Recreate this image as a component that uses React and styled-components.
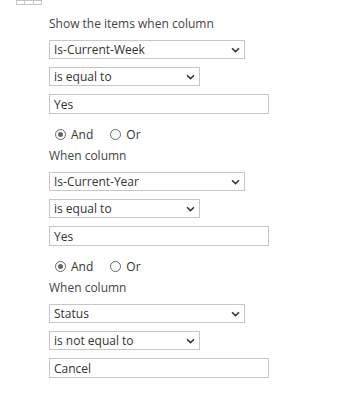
import styled, { createGlobalStyle } from 'styled-components';

const GlobalStyle = createGlobalStyle`
  body {
    margin: 0;
    background: #ffffff;
    font-family: 'Open Sans', 'Noto Sans', sans-serif;
  }
`;

const groups = [
  { label: 'Show the items when column', column: 'Is-Current-Week', op: 'is equal to', value: 'Yes', join: true },
  { label: 'When column', column: 'Is-Current-Year', op: 'is equal to', value: 'Yes', join: true },
  { label: 'When column', column: 'Status', op: 'is not equal to', value: 'Cancel', join: false }
];

function Chevron() {
  return (
    <svg width="9" height="6" viewBox="0 0 9 6">
      <path d="M1 1.2 L4.5 4.6 L8 1.2" fill="none" stroke="#333" strokeWidth="1.5" />
    </svg>
  );
}

function TableIcon() {
  return (
    <svg width="26" height="12" viewBox="0 0 26 12">
      <g fill="none" stroke="#c4c4c4" strokeWidth="1">
        <rect x="0.5" y="0.5" width="25" height="11" />
        <line x1="0.5" y1="7.5" x2="25.5" y2="7.5" />
        <line x1="8.5" y1="0.5" x2="8.5" y2="11.5" />
        <line x1="17.5" y1="0.5" x2="17.5" y2="11.5" />
      </g>
    </svg>
  );
}

export default function App() {
  return (
    <>
      <GlobalStyle />
      <Header>
        <IconSlot>
          <TableIcon />
        </IconSlot>
      </Header>
      <Form>
        {groups.map((g, i) => (
          <Group key={i}>
            <Label>{g.label}</Label>
            <Select width={196}>
              <span>{g.column}</span>
              <Chevron />
            </Select>
            <Select width={151}>
              <span>{g.op}</span>
              <Chevron />
            </Select>
            <TextBox>{g.value}</TextBox>
            {g.join && (
              <RadioRow>
                <RadioOption>
                  <Radio checked />
                  And
                </RadioOption>
                <RadioOption>
                  <Radio />
                  Or
                </RadioOption>
              </RadioRow>
            )}
          </Group>
        ))}
      </Form>
    </>
  );
}

const Header = styled.div`
  height: 5px;
  display: flex;
  align-items: flex-end;
  padding-left: 16px;
`;

const IconSlot = styled.div`
  display: flex;
  align-items: flex-end;
  height: 5px;
  overflow: hidden;

  svg {
    display: block;
  }
`;

const Form = styled.div`
  padding-left: 49px;
  padding-top: 11px;
`;

const Group = styled.div`
  display: flex;
  flex-direction: column;
  align-items: flex-start;
`;

const Label = styled.div`
  font-size: 12px;
  line-height: 16px;
  color: #444;
  margin-bottom: 8px;
`;

const Select = styled.div`
  box-sizing: border-box;
  width: ${(p) => p.width}px;
  height: 19px;
  border: 1px solid #c6c6c6;
  background: #fff;
  display: flex;
  align-items: center;
  justify-content: space-between;
  padding: 0 4px;
  font-size: 12px;
  color: #333;
  margin-bottom: 8px;

  svg {
    display: block;
  }
`;

const TextBox = styled.div`
  box-sizing: border-box;
  width: 220px;
  height: 20px;
  border: 1px solid #c6c6c6;
  display: flex;
  align-items: center;
  padding-left: 4px;
  font-size: 12px;
  color: #333;
`;

const RadioRow = styled.div`
  display: flex;
  align-items: center;
  gap: 17px;
  height: 16px;
  margin: 12px 0 6px 6px;
`;

const RadioOption = styled.label`
  display: flex;
  align-items: center;
  gap: 5px;
  font-size: 12px;
  color: #333;
`;

const Radio = styled.span`
  box-sizing: border-box;
  width: 11px;
  height: 11px;
  border-radius: 50%;
  border: 1px solid #666;
  display: flex;
  align-items: center;
  justify-content: center;

  &::after {
    content: '';
    width: 5px;
    height: 5px;
    border-radius: 50%;
    background: ${(p) => (p.checked ? '#666' : 'transparent')};
  }
`;
